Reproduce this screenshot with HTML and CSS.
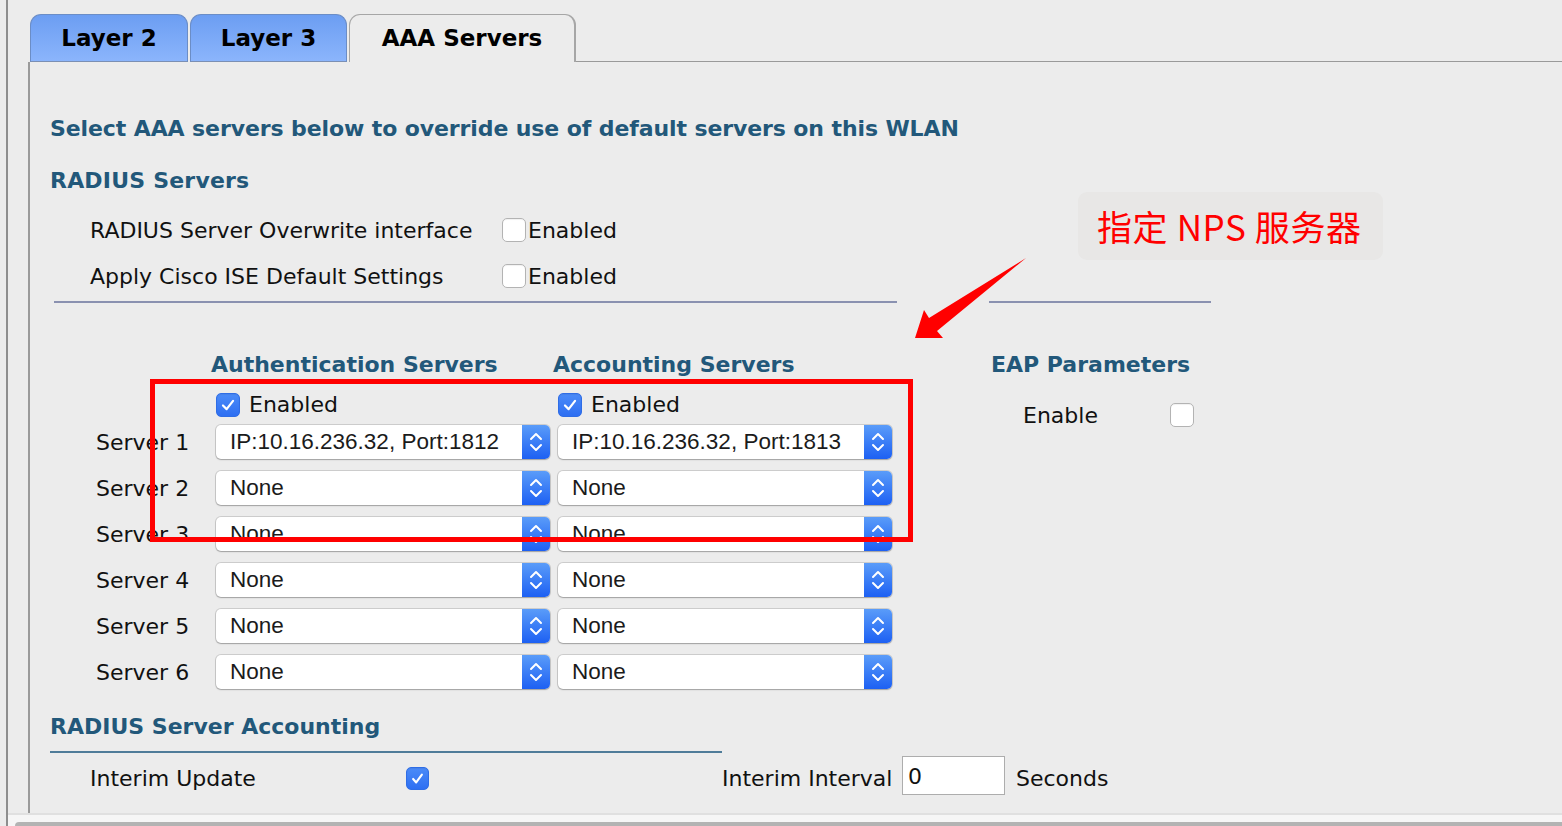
FILE: index.html
```html
<!DOCTYPE html>
<html lang="en">
<head>
<meta charset="utf-8">
<title>AAA Servers</title>
<link rel="stylesheet" href="styles.css">
</head>
<body>
<div class="frame">
  <div class="main">
    <div class="tabbar">
      <div class="tab blue t1">Layer 2</div>
      <div class="tab blue t2">Layer 3</div>
      <div class="tab active t3">AAA Servers</div>
      <div class="tab-rest"></div>
    </div>
    <div class="panel">
      <h1 class="title intro">Select AAA servers below to override use of default servers on this WLAN</h1>
      <h2 class="title radius">RADIUS Servers</h2>
      <div class="opt-row first">
        <span class="opt-label">RADIUS Server Overwrite interface</span>
        <span class="cb"></span><span class="cb-text">Enabled</span>
      </div>
      <div class="opt-row">
        <span class="opt-label">Apply Cisco ISE Default Settings</span>
        <span class="cb"></span><span class="cb-text">Enabled</span>
      </div>
      <div class="rules">
        <div class="rule rule-left"></div>
        <div class="rule rule-right"></div>
      </div>
      <div class="columns">
        <div class="servers">
          <div></div>
          <div class="col-head">Authentication Servers</div>
          <div class="col-head">Accounting Servers</div>

          <div></div>
          <div class="en"><span class="cb checked"><svg viewBox="0 0 24 24"><path d="M6.5 12.5 L10.5 16.5 L17.5 7.5"/></svg></span><span class="en-text">Enabled</span></div>
          <div class="en"><span class="cb checked"><svg viewBox="0 0 24 24"><path d="M6.5 12.5 L10.5 16.5 L17.5 7.5"/></svg></span><span class="en-text">Enabled</span></div>

          <div class="srv-label">Server 1</div>
          <div class="select"><span class="select-text">IP:10.16.236.32, Port:1812</span><span class="stepper"><svg viewBox="0 0 28 34"><path d="M9 14 L14 9 L19 14 M9 20 L14 25 L19 20"/></svg></span></div>
          <div class="select"><span class="select-text">IP:10.16.236.32, Port:1813</span><span class="stepper"><svg viewBox="0 0 28 34"><path d="M9 14 L14 9 L19 14 M9 20 L14 25 L19 20"/></svg></span></div>

          <div class="srv-label">Server 2</div>
          <div class="select"><span class="select-text">None</span><span class="stepper"><svg viewBox="0 0 28 34"><path d="M9 14 L14 9 L19 14 M9 20 L14 25 L19 20"/></svg></span></div>
          <div class="select"><span class="select-text">None</span><span class="stepper"><svg viewBox="0 0 28 34"><path d="M9 14 L14 9 L19 14 M9 20 L14 25 L19 20"/></svg></span></div>

          <div class="srv-label">Server 3</div>
          <div class="select"><span class="select-text">None</span><span class="stepper"><svg viewBox="0 0 28 34"><path d="M9 14 L14 9 L19 14 M9 20 L14 25 L19 20"/></svg></span></div>
          <div class="select"><span class="select-text">None</span><span class="stepper"><svg viewBox="0 0 28 34"><path d="M9 14 L14 9 L19 14 M9 20 L14 25 L19 20"/></svg></span></div>

          <div class="srv-label">Server 4</div>
          <div class="select"><span class="select-text">None</span><span class="stepper"><svg viewBox="0 0 28 34"><path d="M9 14 L14 9 L19 14 M9 20 L14 25 L19 20"/></svg></span></div>
          <div class="select"><span class="select-text">None</span><span class="stepper"><svg viewBox="0 0 28 34"><path d="M9 14 L14 9 L19 14 M9 20 L14 25 L19 20"/></svg></span></div>

          <div class="srv-label">Server 5</div>
          <div class="select"><span class="select-text">None</span><span class="stepper"><svg viewBox="0 0 28 34"><path d="M9 14 L14 9 L19 14 M9 20 L14 25 L19 20"/></svg></span></div>
          <div class="select"><span class="select-text">None</span><span class="stepper"><svg viewBox="0 0 28 34"><path d="M9 14 L14 9 L19 14 M9 20 L14 25 L19 20"/></svg></span></div>

          <div class="srv-label">Server 6</div>
          <div class="select"><span class="select-text">None</span><span class="stepper"><svg viewBox="0 0 28 34"><path d="M9 14 L14 9 L19 14 M9 20 L14 25 L19 20"/></svg></span></div>
          <div class="select"><span class="select-text">None</span><span class="stepper"><svg viewBox="0 0 28 34"><path d="M9 14 L14 9 L19 14 M9 20 L14 25 L19 20"/></svg></span></div>
        </div>
        <div class="eap">
          <div class="title eap-title">EAP Parameters</div>
          <div class="eap-row"><span class="eap-label">Enable</span><span class="cb"></span></div>
        </div>
      </div>
      <h2 class="title acct">RADIUS Server Accounting</h2>
      <div class="acct-rule"></div>
      <div class="interim">
        <span class="iu-label">Interim Update</span>
        <span class="cb checked small"><svg viewBox="0 0 24 24"><path d="M7 12.5 L10.5 16.5 L17 7.5"/></svg></span>
        <span class="ii-label">Interim Interval</span>
        <span class="ii-input">0</span>
        <span class="ii-unit">Seconds</span>
      </div>
    </div>
  </div>
  <div class="footer"><div class="footer-bar"></div></div>
</div>

<div class="annot-box">指定 NPS 服务器</div>
<div class="annot-rect"></div>
<svg class="annot-arrow" viewBox="0 0 1562 826" width="1562" height="826"><polygon points="1026,258 937,331 943,338 915,338 924,310 929,318"/></svg>
</body>
</html>
```

FILE: styles.css
```css
* { box-sizing: border-box; }
html, body { margin: 0; padding: 0; }
body {
  width: 1562px;
  height: 826px;
  overflow: hidden;
  position: relative;
  background: #ececec;
  font-family: "DejaVu Sans", Verdana, sans-serif;
  font-size: 22px;
  color: #111;
}

.frame {
  margin-left: 6px;
  border-left: 2px solid #8e8e8e;
  height: 826px;
  display: flex;
  flex-direction: column;
}
.main {
  height: 813px;
  padding-left: 20px;
  display: flex;
  flex-direction: column;
}

/* Tabs */
.tabbar {
  display: flex;
  align-items: flex-end;
  height: 62px;
  padding-left: 2px;
  flex: none;
}
.tab {
  height: 48px;
  border-radius: 11px 11px 0 0;
  font-weight: bold;
  font-size: 23px;
  line-height: 46px;
  text-align: center;
  color: #000;
  white-space: nowrap;
}
.tab.blue {
  background: linear-gradient(#6c9ef2, #8bb5fc);
  border: 1px solid #6b8dc6;
  border-bottom: 1px solid #7b8fb3;
  margin-right: 2px;
}
.t1 { width: 158px; }
.t2 { width: 157px; }
.t3 { width: 227px; }
.tab.active {
  background: #ececec;
  border: 1px solid #a6a6a6;
  border-bottom: none;
  border-width: 1px 2px 0 1px;
}
.tab-rest {
  flex: 1;
  border-bottom: 1px solid #9a9a9a;
}

/* Panel */
.panel {
  flex: 1;
  border-left: 2px solid #9a9a9a;
  padding-left: 20px;
}
.title {
  margin: 0;
  font-weight: bold;
  font-size: 22px;
  line-height: 28px;
  color: #22587a;
  white-space: nowrap;
}
.intro { margin-top: 53px; letter-spacing: -0.1px; }
.radius { margin-top: 24px; letter-spacing: 0.2px; }

.opt-row {
  display: flex;
  align-items: center;
  height: 46px;
  padding-left: 40px;
}
.opt-row.first { margin-top: 12px; }
.opt-label { width: 412px; white-space: nowrap; }
.cb-text { margin-left: 2px; }

.cb {
  flex: none;
  display: inline-flex;
  width: 24px;
  height: 24px;
  border-radius: 5px;
  background: #fff;
  border: 1px solid #b3b3b3;
  box-shadow: inset 0 1px 1px rgba(0,0,0,0.06);
}
.cb.checked {
  background: linear-gradient(#4b8bf8, #2e6ff2);
  border: 1px solid #2f6de6;
}
.cb svg { width: 100%; height: 100%; }
.cb svg path {
  fill: none;
  stroke: #fff;
  stroke-width: 2.4;
  stroke-linecap: round;
  stroke-linejoin: round;
}
.cb.small { width: 23px; height: 23px; }

.rules {
  display: flex;
  gap: 92px;
  margin-top: 2px;
  padding-left: 4px;
}
.rule { height: 2px; background: #8a91b0; }
.rule-left { width: 843px; }
.rule-right { width: 222px; }

.columns { display: flex; }
.servers {
  display: grid;
  grid-template-columns: 112px 334px 334px;
  grid-template-rows: 28px 40px repeat(6, 46px);
  column-gap: 8px;
  margin-left: 46px;
  margin-top: 48px;
}
.col-head {
  margin-left: -5px;
  font-weight: bold;
  line-height: 28px;
  color: #22587a;
  white-space: nowrap;
}
.en {
  display: flex;
  align-items: center;
  align-self: end;
  padding-bottom: 2px;
}
.en-text { margin-left: 9px; line-height: 24px; }
.srv-label { align-self: center; white-space: nowrap; }
.select {
  align-self: center;
  height: 34px;
  display: flex;
  background: #fff;
  border-radius: 5px;
  box-shadow: 0 0 0 1px rgba(0,0,0,0.13), 0 1px 1.5px rgba(0,0,0,0.22);
}
.select-text {
  flex: 1;
  padding-left: 14px;
  font-family: "Liberation Sans", Arial, sans-serif;
  font-size: 22.5px;
  line-height: 34px;
  color: #1b1b1b;
  white-space: nowrap;
  overflow: hidden;
}
.stepper {
  width: 28px;
  flex: none;
  background: linear-gradient(#5a9cf9, #1d60f3);
  border-radius: 0 5px 5px 0;
  display: flex;
}
.stepper svg { width: 28px; height: 34px; }
.stepper path {
  fill: none;
  stroke: #fff;
  stroke-width: 2;
  stroke-linecap: round;
  stroke-linejoin: round;
}

.eap {
  margin-left: 99px;
  margin-top: 48px;
}
.eap-row {
  display: flex;
  align-items: center;
  height: 46px;
  margin-top: 13px;
  padding-left: 32px;
}
.eap-label { width: 147px; }

.acct { margin-top: 18px; }
.acct-rule {
  width: 672px;
  height: 2px;
  margin-top: 10px;
  background: #4f7c99;
}
.interim {
  display: flex;
  align-items: center;
  height: 46px;
  margin-top: 2px;
  padding-left: 40px;
}
.iu-label { width: 316px; white-space: nowrap; }
.ii-label { margin-left: 293px; width: 180px; white-space: nowrap; }
.ii-input {
  width: 103px;
  height: 39px;
  margin-top: -5px;
  background: #fff;
  border: 1px solid #adadad;
  padding-left: 5px;
  line-height: 39px;
}
.ii-unit { margin-left: 11px; }

/* Footer */
.footer {
  height: 13px;
  flex: none;
  border-top: 2px solid #e0e0e0;
  background: #f6f6f6;
  padding-top: 7px;
}
.footer-bar {
  height: 4px;
  margin-left: 7px;
  background: #b3b3b3;
  border-radius: 4px 0 0 0;
}

/* Annotations */
.annot-box {
  position: absolute;
  left: 1078px;
  top: 192px;
  width: 305px;
  height: 68px;
  padding-left: 19px;
  background: #e8e7e6;
  border-radius: 9px;
  font-family: "Noto Sans CJK SC", "Noto Sans", sans-serif;
  font-size: 35px;
  letter-spacing: 0.6px;
  line-height: 68px;
  color: #ff0000;
  white-space: nowrap;
}
.annot-rect {
  position: absolute;
  left: 150px;
  top: 379px;
  width: 763px;
  height: 163px;
  border: 5px solid #ff0000;
}
.annot-arrow {
  position: absolute;
  left: 0;
  top: 0;
  pointer-events: none;
}
.annot-arrow polygon { fill: #ff0000; }
```
